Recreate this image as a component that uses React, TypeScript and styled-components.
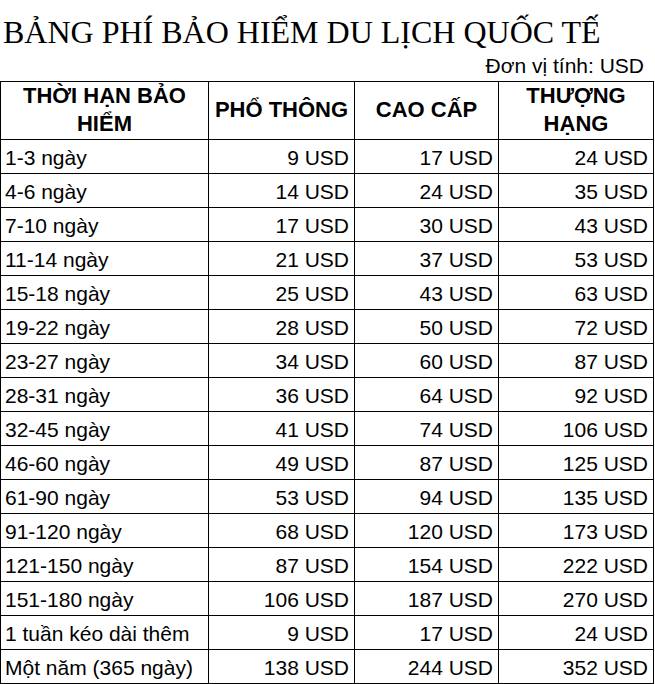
import React from "react";
import styled, { createGlobalStyle } from "styled-components";

const rows: [string, string, string, string][] = [
    ["1-3 ngày", "9 USD", "17 USD", "24 USD"],
    ["4-6 ngày", "14 USD", "24 USD", "35 USD"],
    ["7-10 ngày", "17 USD", "30 USD", "43 USD"],
    ["11-14 ngày", "21 USD", "37 USD", "53 USD"],
    ["15-18 ngày", "25 USD", "43 USD", "63 USD"],
    ["19-22 ngày", "28 USD", "50 USD", "72 USD"],
    ["23-27 ngày", "34 USD", "60 USD", "87 USD"],
    ["28-31 ngày", "36 USD", "64 USD", "92 USD"],
    ["32-45 ngày", "41 USD", "74 USD", "106 USD"],
    ["46-60 ngày", "49 USD", "87 USD", "125 USD"],
    ["61-90 ngày", "53 USD", "94 USD", "135 USD"],
    ["91-120 ngày", "68 USD", "120 USD", "173 USD"],
    ["121-150 ngày", "87 USD", "154 USD", "222 USD"],
    ["151-180 ngày", "106 USD", "187 USD", "270 USD"],
    ["1 tuần kéo dài thêm", "9 USD", "17 USD", "24 USD"],
    ["Một năm (365 ngày)", "138 USD", "244 USD", "352 USD"],
];

const App = () => {
    return (
        <>
            <GlobalStyle />
            <Page>
                <Title>BẢNG PHÍ BẢO HIỂM DU LỊCH QUỐC TẾ</Title>
                <Unit>Đơn vị tính: USD</Unit>
                <PriceTable>
                    <HeadCell>THỜI HẠN BẢO<br />HIỂM</HeadCell>
                    <HeadCell>PHỔ THÔNG</HeadCell>
                    <HeadCell>CAO CẤP</HeadCell>
                    <HeadCell>THƯỢNG<br />HẠNG</HeadCell>
                    {rows.map((row) => (
                        <React.Fragment key={row[0]}>
                            <Cell>{row[0]}</Cell>
                            <Cell $right>{row[1]}</Cell>
                            <Cell $right>{row[2]}</Cell>
                            <Cell $right>{row[3]}</Cell>
                        </React.Fragment>
                    ))}
                </PriceTable>
            </Page>
        </>
    );
};

export default App;

const GlobalStyle = createGlobalStyle`
    html, body {
        margin: 0;
        padding: 0;
        background: #ffffff;
    }
`;

const Page = styled.div`
    width: 655px;
    display: flex;
    flex-direction: column;
    color: #000000;
`;

const Title = styled.h1`
    margin: 0;
    padding: 14px 0 0 3px;
    font-family: "Liberation Serif", "Times New Roman", serif;
    font-weight: normal;
    font-size: 32px;
    line-height: 36px;
    white-space: nowrap;
`;

const Unit = styled.div`
    margin-top: 4px;
    padding-right: 11px;
    text-align: right;
    font-family: "Liberation Sans", Arial, sans-serif;
    font-size: 21px;
    line-height: 24px;
`;

const PriceTable = styled.div`
    margin-top: 3px;
    width: 654px;
    box-sizing: border-box;
    display: grid;
    grid-template-columns: 207px 145px 143px 154px;
    grid-template-rows: 57px;
    grid-auto-rows: 33px;
    gap: 1px;
    padding: 1px;
    background: #000000;
    font-family: "Liberation Sans", Arial, sans-serif;
`;

const HeadCell = styled.div`
    background: #ffffff;
    display: flex;
    align-items: center;
    justify-content: center;
    text-align: center;
    font-weight: bold;
    font-size: 22px;
    line-height: 28px;
    padding-bottom: 1px;
`;

const Cell = styled.div<{ $right?: boolean }>`
    background: #ffffff;
    box-sizing: border-box;
    padding: 2px ${(p) => (p.$right ? "5px" : "0")} 0 ${(p) => (p.$right ? "0" : "4px")};
    text-align: ${(p) => (p.$right ? "right" : "left")};
    font-size: 21px;
    line-height: 31px;
    white-space: nowrap;
`;
